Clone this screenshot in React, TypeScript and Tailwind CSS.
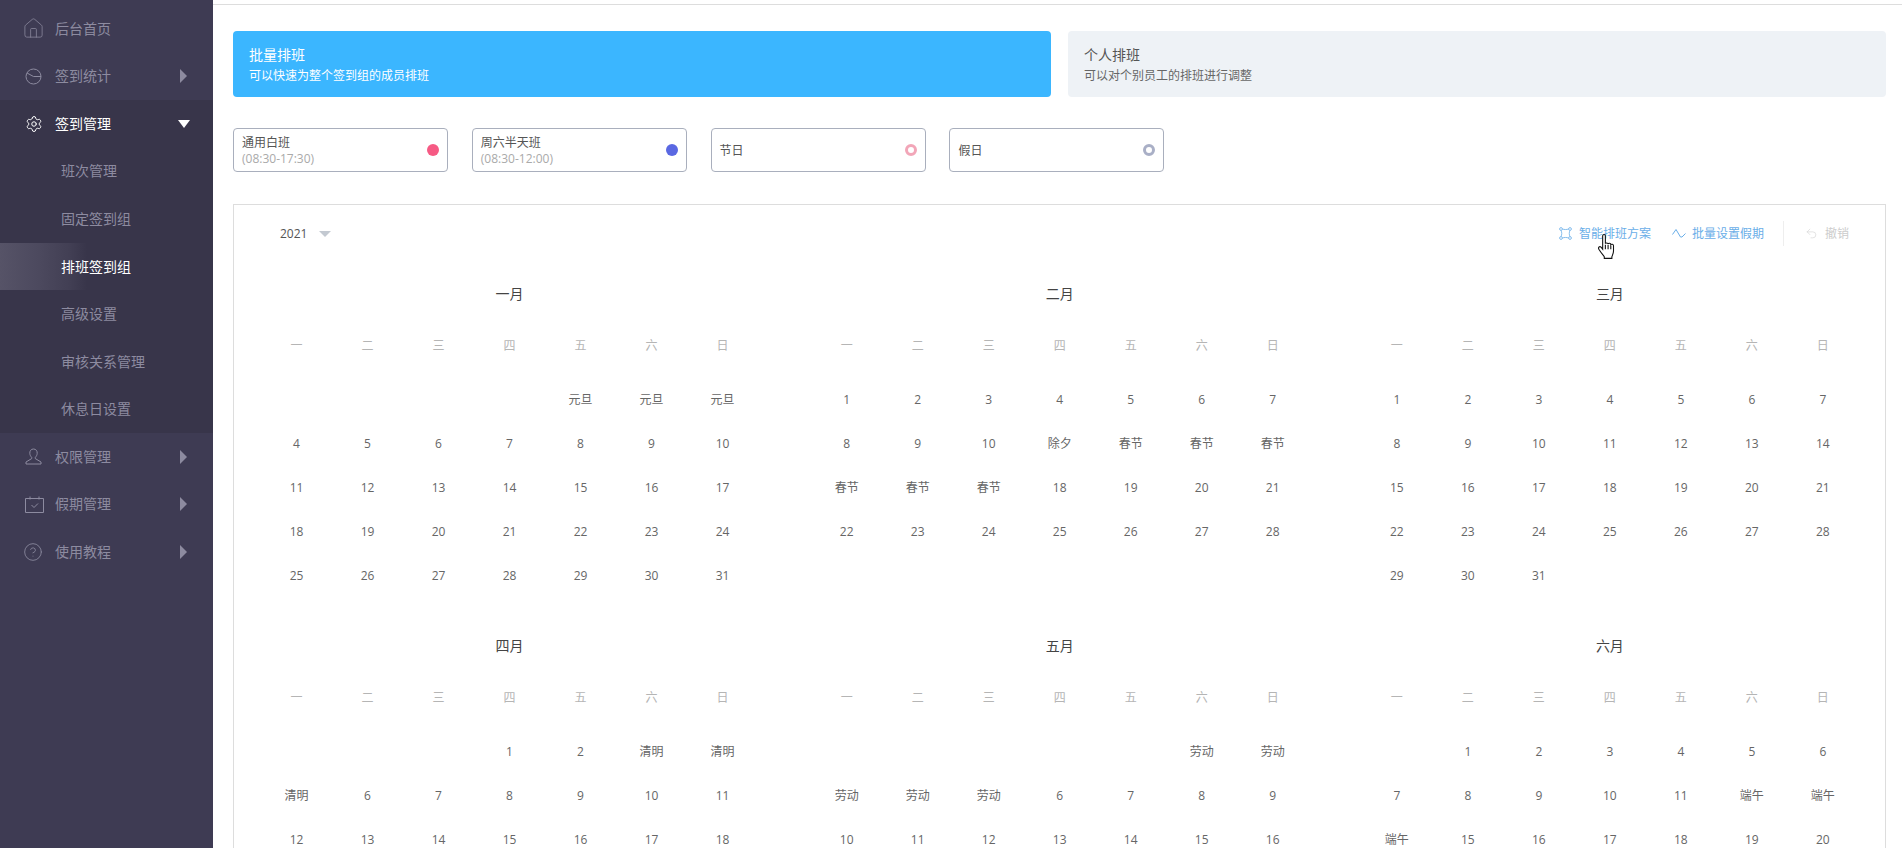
import React from 'react';
import { Home, Settings, CircleHelp, Undo2 } from 'lucide-react';

const font = '"Open Sans", "Noto Sans CJK SC", "Liberation Sans", sans-serif';

const Caret = ({ open }: { open?: boolean }) =>
  open ? (
    <span className="h-0 w-0 border-x-[6.5px] border-t-[8px] border-x-transparent border-t-white" />
  ) : (
    <span className="h-0 w-0 border-y-[7px] border-l-[7px] border-y-transparent border-l-[#8d8ba0]" />
  );

const PieIcon = () => (
  <svg width="17" height="17" viewBox="0 0 17 17" fill="none" stroke="currentColor" strokeWidth="1">
    <circle cx="8.5" cy="8.5" r="7.5" />
    <path d="M2 5l6.5 3.5H16" />
  </svg>
);

const UserIcon = () => (
  <svg width="17" height="17" viewBox="0 0 17 17" fill="none" stroke="currentColor" strokeWidth="1">
    <path d="M8.5 1C6 1 4.6 3 4.8 5.4c.1 1.6.9 3 1.9 3.9v1.3L1 14v2h15v-2l-5.700-3.400V9.300c1-.9 1.800-2.300 1.900-3.900C12.400 3 11 1 8.500 1z" />
  </svg>
);

const CalendarIcon = () => (
  <svg width="19" height="17" viewBox="0 0 19 17" fill="none" stroke="currentColor" strokeWidth="1">
    <path d="M.5 2.500h18v14H.5zM5 .5v3M14 .5v3" />
    <path d="M6.500 9l2.500 2.500L13 7.500" />
  </svg>
);

const nav = [
  { label: '后台首页', icon: <Home size={23} strokeWidth={0.8} className="-ml-[3px] -my-[3px]" /> },
  { label: '签到统计', icon: <PieIcon />, caret: true },
];
const subNav = ['班次管理', '固定签到组', '排班签到组', '高级设置', '审核关系管理', '休息日设置'];
const navBottom = [
  { label: '权限管理', icon: <UserIcon /> },
  { label: '假期管理', icon: <CalendarIcon /> },
  { label: '使用教程', icon: <CircleHelp size={20} strokeWidth={1} className="-ml-[2px] -my-[2px]" /> },
];

const NavRow = ({ label, icon, caret }: { label: string; icon: React.ReactNode; caret?: boolean }) => (
  <div className="flex h-[47.55px] items-center pl-[25px] pr-[26px] text-[#8d8ba0]">
    <span className="flex w-[30px] shrink-0">{icon}</span>
    <span className="flex-1">{label}</span>
    {caret && <Caret />}
  </div>
);

const Sidebar = () => (
  <aside className="flex h-[848px] w-[213px] shrink-0 flex-col bg-[#3e3b53] pt-[5px] text-[14px] leading-none">
    {nav.map((n) => (
      <NavRow key={n.label} {...n} />
    ))}
    <div className="flex flex-col bg-[#38354a]">
      <div className="flex h-[47.55px] items-center pl-[25px] pr-[23px] text-white">
        <span className="flex w-[30px] shrink-0">
          <Settings size={18} strokeWidth={1.3} />
        </span>
        <span className="flex-1">签到管理</span>
        <Caret open />
      </div>
      {subNav.map((s) => (
        <div
          key={s}
          className={
            s === '排班签到组'
              ? 'flex h-[47.55px] items-center bg-[linear-gradient(90deg,#565367_0%,#4c495e_45%,#423f54_80%,#38354a_100%)] bg-[length:87px_100%] bg-no-repeat pl-[61px] text-white'
              : 'flex h-[47.55px] items-center pl-[61px] text-[#8d8ba0]'
          }
        >
          {s}
        </div>
      ))}
    </div>
    {navBottom.map((n) => (
      <NavRow key={n.label} {...n} caret />
    ))}
  </aside>
);

const ShiftChip = ({ title, time, dot }: { title: string; time?: string; dot: React.ReactNode }) => (
  <div className="flex h-[44px] w-[215px] items-center justify-between rounded-[4px] border border-[#a9afbd] pl-[8px] pr-[8px]">
    <div className="flex flex-col pt-[1px] text-[12px] leading-[16px]">
      <span className="text-[#555]">{title}</span>
      {time && <span className="text-[#aaa]">{time}</span>}
    </div>
    {dot}
  </div>
);

const HOLIDAYS: Record<string, string> = {
  '1-1': '元旦',
  '1-2': '元旦',
  '1-3': '元旦',
  '2-11': '除夕',
  '2-12': '春节',
  '2-13': '春节',
  '2-14': '春节',
  '2-15': '春节',
  '2-16': '春节',
  '2-17': '春节',
  '4-3': '清明',
  '4-4': '清明',
  '4-5': '清明',
  '5-1': '劳动',
  '5-2': '劳动',
  '5-3': '劳动',
  '5-4': '劳动',
  '5-5': '劳动',
  '6-12': '端午',
  '6-13': '端午',
  '6-14': '端午',
};

const months = [
  { name: '一月', offset: 4, days: 31 },
  { name: '二月', offset: 0, days: 28 },
  { name: '三月', offset: 0, days: 31 },
  { name: '四月', offset: 3, days: 30 },
  { name: '五月', offset: 5, days: 31 },
  { name: '六月', offset: 1, days: 30 },
];
const weekdays = ['一', '二', '三', '四', '五', '六', '日'];

const Month = ({ index }: { index: number }) => {
  const m = months[index];
  const cells: (number | null)[] = [
    ...Array.from({ length: m.offset }, () => null),
    ...Array.from({ length: m.days }, (_, i) => i + 1),
  ];
  return (
    <div className="h-[352px] w-[497px] shrink-0">
      <div className="flex h-[20px] items-center justify-center text-[14px] text-[#444]">{m.name}</div>
      <div className="mt-[33px] grid grid-cols-7 text-[12px] leading-[20px] text-[#b5b5b5]">
        {weekdays.map((w) => (
          <div key={w} className="text-center">
            {w}
          </div>
        ))}
      </div>
      <div className="mt-[22px] grid grid-cols-7 text-[12px] text-[#666]">
        {cells.map((d, i) => (
          <div key={i} className="flex h-[44px] items-center justify-center">
            {d === null ? '' : HOLIDAYS[`${index + 1}-${d}`] ?? d}
          </div>
        ))}
      </div>
    </div>
  );
};

const HandCursor = () => (
  <svg className="absolute left-[38px] top-[9px]" width="20" height="26" viewBox="0 0 18 24">
    <path
      d="M5 1.500c0-1.300 2.500-1.300 2.500 0V9c0-1 2.500-1 2.500.3 0-1 2.500-1 2.500.5.500-.7 2.500-.5 2.500 1v5c0 2-.800 3.200-1.500 5.200v1.500H6.500V21C5 19 3 16.500 1.500 14c-1-1.800.800-3 2-1.800L5 14z"
      fill="#fff"
      stroke="#111"
      strokeWidth="1"
    />
    <path d="M7.500 10v4M10 10v4M12.500 10.500V14" stroke="#111" strokeWidth="1" />
  </svg>
);

const Toolbar = () => (
  <div className="flex h-[50px] items-center pl-[46px] pr-[36px] pt-[7px] text-[12px]">
    <span className="text-[#555]">2021</span>
    <span className="ml-[12px] h-0 w-0 border-x-[6px] border-t-[6px] border-x-transparent border-t-[#c3c9d1]" />
    <div className="ml-auto flex items-center text-[#6aaee8]">
      <span className="relative flex items-center gap-[7px]">
        <svg width="13" height="13" viewBox="0 0 13 13" fill="none" stroke="currentColor" strokeWidth="0.8">
          <path d="M2 3.500c1 1.500 1 4.500 0 6M11 3.500c-1 1.500-1 4.500 0 6M3.500 2c1.500.7 4.500.7 6 0M3.500 11c1.500-.7 4.500-.7 6 0" />
          <circle cx="2" cy="2" r="1.400" />
          <circle cx="11" cy="2" r="1.400" />
          <circle cx="2" cy="11" r="1.400" />
          <circle cx="11" cy="11" r="1.400" />
        </svg>
        智能排班方案
        <HandCursor />
      </span>
      <span className="ml-[21px] flex items-center gap-[6px]">
        <svg width="14" height="11" viewBox="0 0 14 11" fill="none" stroke="currentColor" strokeWidth="1">
          <path d="M.5 6.500L4 1.500l4.500 7.500h1.500L13.500 5.500" />
        </svg>
        批量设置假期
      </span>
      <span className="ml-[19px] h-[25px] w-px bg-[#eee]" />
      <span className="ml-[21px] flex items-center gap-[7px] text-[#ccc]">
        <Undo2 size={13} strokeWidth={1} />
        撤销
      </span>
    </div>
  </div>
);

export default function App() {
  return (
    <div className="flex h-[848px] overflow-hidden bg-white" style={{ fontFamily: font }}>
      <Sidebar />
      <main className="flex min-w-0 flex-1 flex-col">
        <div className="h-[5px] shrink-0 border-b border-[#ddd]" />
        <div className="flex flex-col pl-[20px] pr-[16px] pt-[26px]">
          <div className="flex gap-[17px]">
            <div className="flex h-[66px] w-[818px] flex-col justify-center gap-[4px] rounded-[4px] bg-[#3bb6ff] pl-[16px] text-white">
              <span className="text-[14px] leading-[19px]">批量排班</span>
              <span className="text-[12px] leading-[16px]">可以快速为整个签到组的成员排班</span>
            </div>
            <div className="flex h-[66px] flex-1 flex-col justify-center gap-[4px] rounded-[4px] bg-[#eef2f6] pl-[16px]">
              <span className="text-[14px] leading-[19px] text-[#555]">个人排班</span>
              <span className="text-[12px] leading-[16px] text-[#666]">可以对个别员工的排班进行调整</span>
            </div>
          </div>
          <div className="mt-[31px] flex gap-[23.8px]">
            <ShiftChip title="通用白班" time="(08:30-17:30)" dot={<span className="h-[12px] w-[12px] rounded-full bg-[#f65a84]" />} />
            <ShiftChip title="周六半天班" time="(08:30-12:00)" dot={<span className="h-[12px] w-[12px] rounded-full bg-[#5a68e2]" />} />
            <ShiftChip title="节日" dot={<span className="h-[12px] w-[12px] rounded-full border-[3px] border-[#f2a6b8]" />} />
            <ShiftChip title="假日" dot={<span className="h-[12px] w-[12px] rounded-full border-[3px] border-[#a9afc6]" />} />
          </div>
          <section className="mt-[32px] border border-[#ddd] pb-[40px]">
            <Toolbar />
            <div className="mt-[28px] flex flex-wrap gap-x-[53.2px] pl-[27px]">
              {months.map((_, i) => (
                <Month key={i} index={i} />
              ))}
            </div>
          </section>
        </div>
      </main>
    </div>
  );
}
